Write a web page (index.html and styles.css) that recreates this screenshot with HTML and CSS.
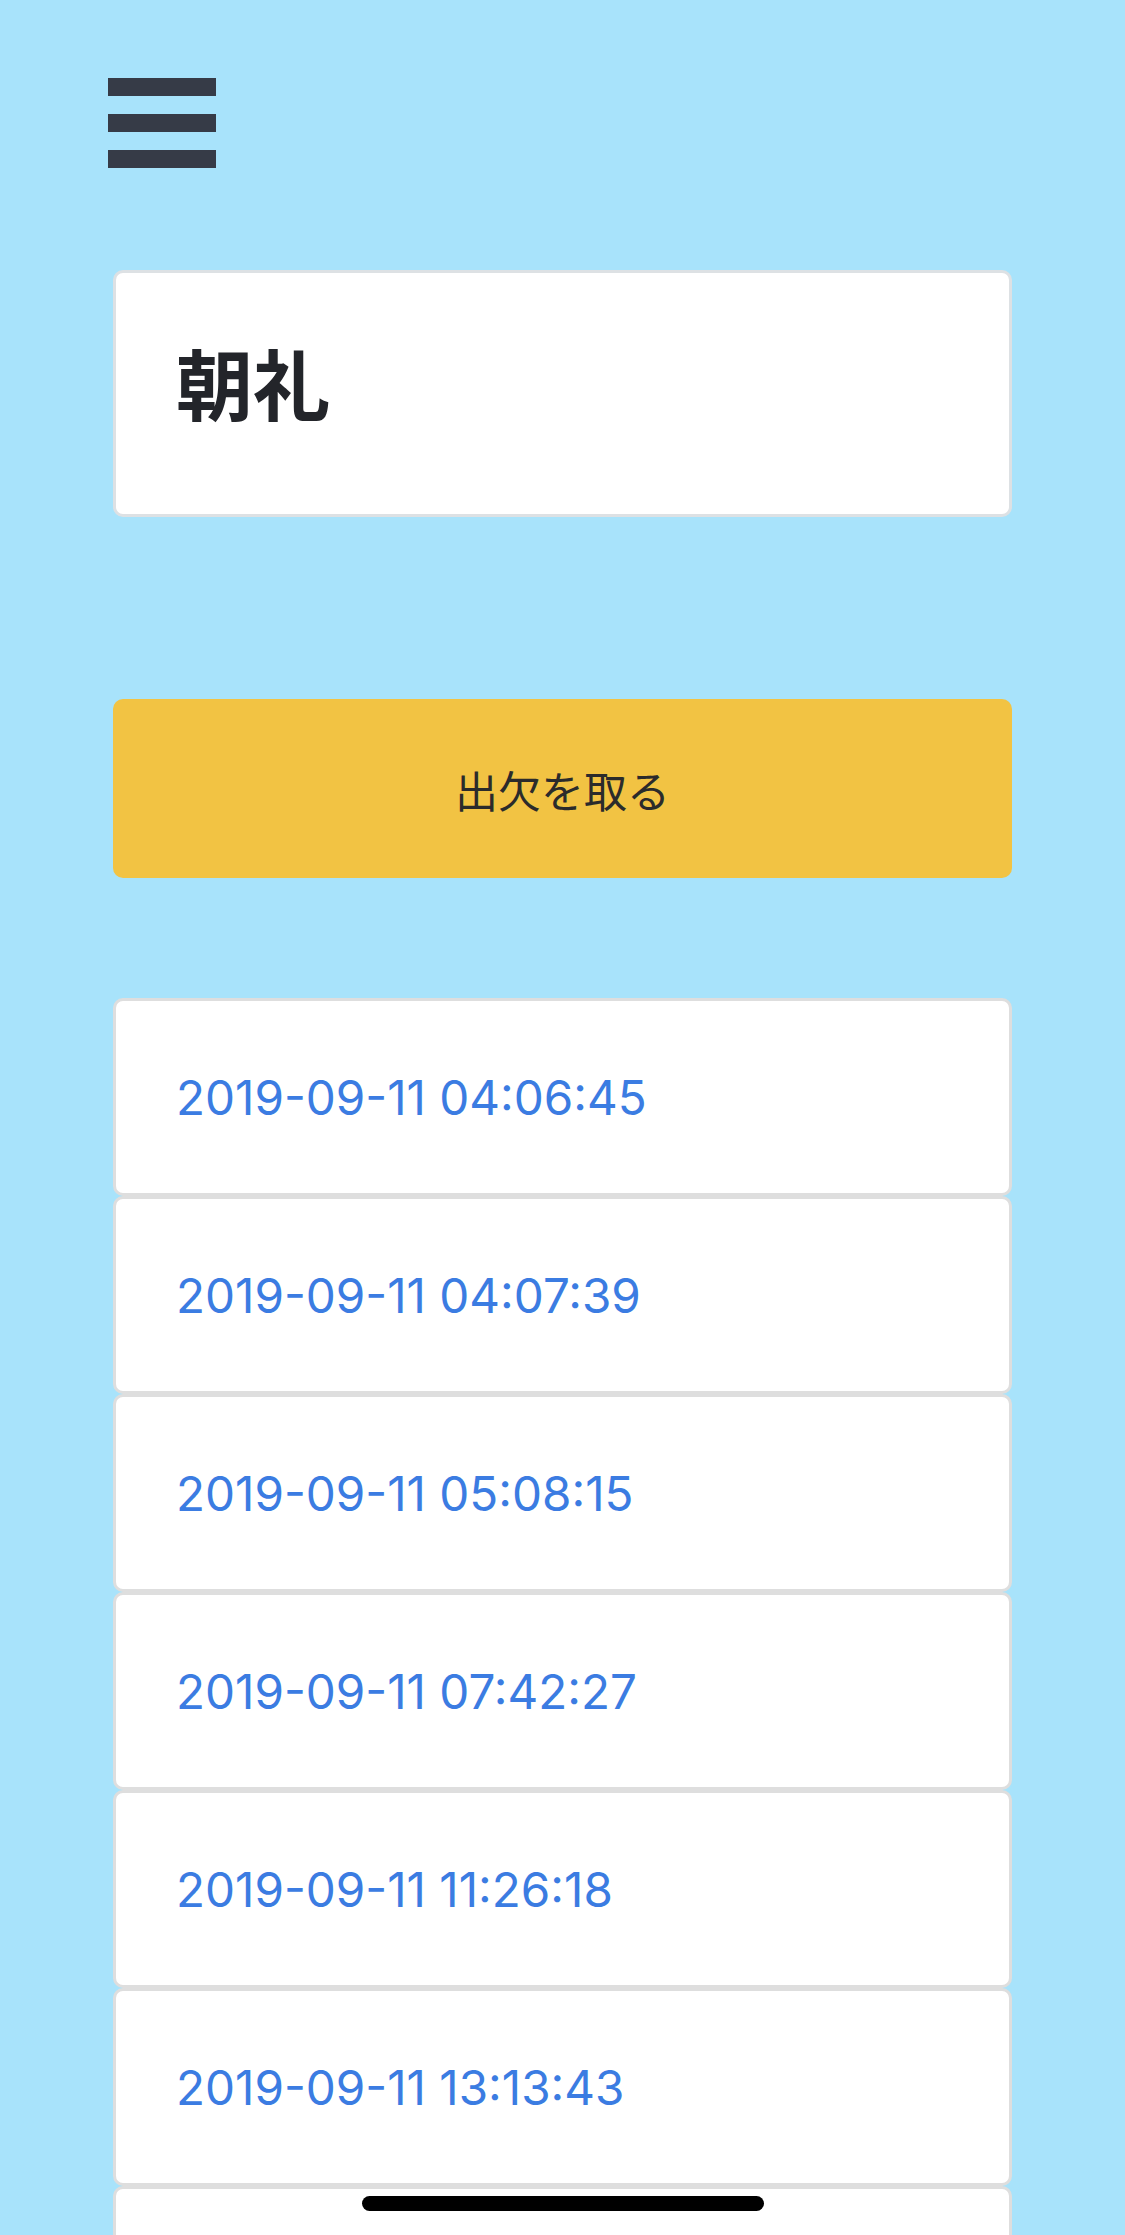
FILE: index.html
```html
<!DOCTYPE html>
<html lang="ja">
<head>
<meta charset="utf-8">
<title>朝礼</title>
<link rel="stylesheet" href="styles.css">
</head>
<body>
<div class="page">
  <header class="topbar">
    <button class="menu" aria-label="menu">
      <span class="bar"></span>
      <span class="bar"></span>
      <span class="bar"></span>
    </button>
  </header>
  <main class="content">
    <section class="title-card">
      <h1 class="title">朝礼</h1>
    </section>
    <button class="attend">出欠を取る</button>
    <ul class="records">
      <li class="record"><a href="#">2019-09-11 04:06:45</a></li>
      <li class="record"><a href="#">2019-09-11 04:07:39</a></li>
      <li class="record"><a href="#">2019-09-11 05:08:15</a></li>
      <li class="record"><a href="#">2019-09-11 07:42:27</a></li>
      <li class="record"><a href="#">2019-09-11 11:26:18</a></li>
      <li class="record"><a href="#">2019-09-11 13:13:43</a></li>
      <li class="record"></li>
    </ul>
  </main>
</div>
<div class="home-indicator"></div>
</body>
</html>
```
FILE: styles.css
```css
html, body {
  margin: 0;
  padding: 0;
}
body {
  background: #a8e3fb;
  font-family: "Noto Sans CJK JP", "Noto Sans", sans-serif;
  height: 2235px;
  overflow: hidden;
  position: relative;
}
.page {
  padding: 0 113px;
}
.topbar {
  padding-top: 78px;
  margin-left: -5px;
}
.menu {
  display: flex;
  flex-direction: column;
  gap: 18px;
  padding: 0;
  border: 0;
  background: none;
  width: 108px;
}
.bar {
  display: block;
  width: 108px;
  height: 18px;
  background: #363b47;
}
.content {
  display: flex;
  flex-direction: column;
  margin-top: 102px;
}
.title-card {
  background: #fff;
  border: 3px solid #dde1e4;
  border-radius: 10px;
  height: 241px;
  box-sizing: content-box;
  padding: 0 60px;
  display: flex;
  align-items: center;
}
.title {
  margin: 0 0 24px;
  font-family: "Noto Sans CJK JP", sans-serif;
  font-weight: 700;
  font-size: 77px;
  line-height: 1;
  color: #23252a;
}
.attend {
  margin-top: 182px;
  height: 179px;
  border: 0;
  border-radius: 10px;
  background: #f2c343;
  color: #2b2b2b;
  font-family: "Noto Sans CJK JP", sans-serif;
  font-weight: 400;
  font-size: 43px;
  padding: 0;
}
.records {
  list-style: none;
  margin: 120px 0 0;
  padding: 0;
}
.record {
  height: 192px;
  background: #fff;
  border: 3px solid #dedede;
  border-radius: 10px;
  display: flex;
  align-items: center;
  padding: 0 60px;
}
.record a {
  color: #3b7ce2;
  text-decoration: none;
  font-family: Inter, "Noto Sans", sans-serif;
  font-size: 47.6px;
}
.home-indicator {
  position: absolute;
  left: 362px;
  top: 2196px;
  width: 402px;
  height: 15px;
  border-radius: 8px;
  background: #000;
}
```
